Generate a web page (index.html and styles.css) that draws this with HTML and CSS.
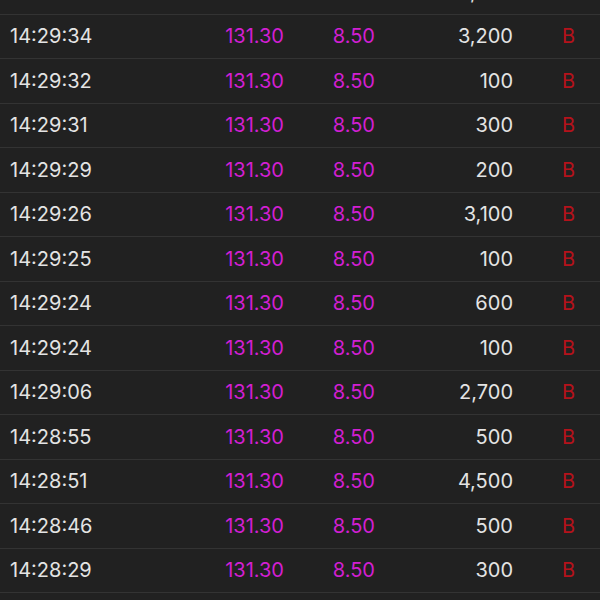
FILE: index.html
```html
<!DOCTYPE html>
<html lang="en">
<head>
<meta charset="utf-8">
<title>Trades</title>
<link rel="stylesheet" href="styles.css">
</head>
<body>
<div class="list">
  <div class="row"><span class="time">14:29:35</span><span class="price">131.30</span><span class="chg">8.50</span><span class="vol">1,000</span><span class="side">B</span></div>
  <div class="row"><span class="time">14:29:34</span><span class="price">131.30</span><span class="chg">8.50</span><span class="vol">3,200</span><span class="side">B</span></div>
  <div class="row"><span class="time">14:29:32</span><span class="price">131.30</span><span class="chg">8.50</span><span class="vol">100</span><span class="side">B</span></div>
  <div class="row"><span class="time">14:29:31</span><span class="price">131.30</span><span class="chg">8.50</span><span class="vol">300</span><span class="side">B</span></div>
  <div class="row"><span class="time">14:29:29</span><span class="price">131.30</span><span class="chg">8.50</span><span class="vol">200</span><span class="side">B</span></div>
  <div class="row"><span class="time">14:29:26</span><span class="price">131.30</span><span class="chg">8.50</span><span class="vol">3,100</span><span class="side">B</span></div>
  <div class="row"><span class="time">14:29:25</span><span class="price">131.30</span><span class="chg">8.50</span><span class="vol">100</span><span class="side">B</span></div>
  <div class="row"><span class="time">14:29:24</span><span class="price">131.30</span><span class="chg">8.50</span><span class="vol">600</span><span class="side">B</span></div>
  <div class="row"><span class="time">14:29:24</span><span class="price">131.30</span><span class="chg">8.50</span><span class="vol">100</span><span class="side">B</span></div>
  <div class="row"><span class="time">14:29:06</span><span class="price">131.30</span><span class="chg">8.50</span><span class="vol">2,700</span><span class="side">B</span></div>
  <div class="row"><span class="time">14:28:55</span><span class="price">131.30</span><span class="chg">8.50</span><span class="vol">500</span><span class="side">B</span></div>
  <div class="row"><span class="time">14:28:51</span><span class="price">131.30</span><span class="chg">8.50</span><span class="vol">4,500</span><span class="side">B</span></div>
  <div class="row"><span class="time">14:28:46</span><span class="price">131.30</span><span class="chg">8.50</span><span class="vol">500</span><span class="side">B</span></div>
  <div class="row"><span class="time">14:28:29</span><span class="price">131.30</span><span class="chg">8.50</span><span class="vol">300</span><span class="side">B</span></div>
</div>
</body>
</html>
```

FILE: styles.css
```css
html, body {
  margin: 0;
  padding: 0;
  background: #212121;
  overflow: hidden;
}
body {
  width: 600px;
  height: 600px;
  font-family: Inter, "Noto Sans", Roboto, sans-serif;
  font-size: 20px;
}
.list {
  margin-top: -30px;
}
.row {
  box-sizing: border-box;
  height: 44.5px;
  border-bottom: 1px solid #333333;
  display: grid;
  grid-template-columns: 10px 120px 154px 91px 138px 49px 38px;
  align-items: center;
  white-space: nowrap;
}
.time {
  grid-column: 2;
  color: #e4e4e4;
}
.price {
  grid-column: 3;
  text-align: right;
  color: #d21fd2;
}
.chg {
  grid-column: 4;
  text-align: right;
  color: #d21fd2;
}
.vol {
  grid-column: 5;
  text-align: right;
  color: #e4e4e4;
}
.side {
  grid-column: 7;
  text-align: left;
  color: #b5121b;
}
```
